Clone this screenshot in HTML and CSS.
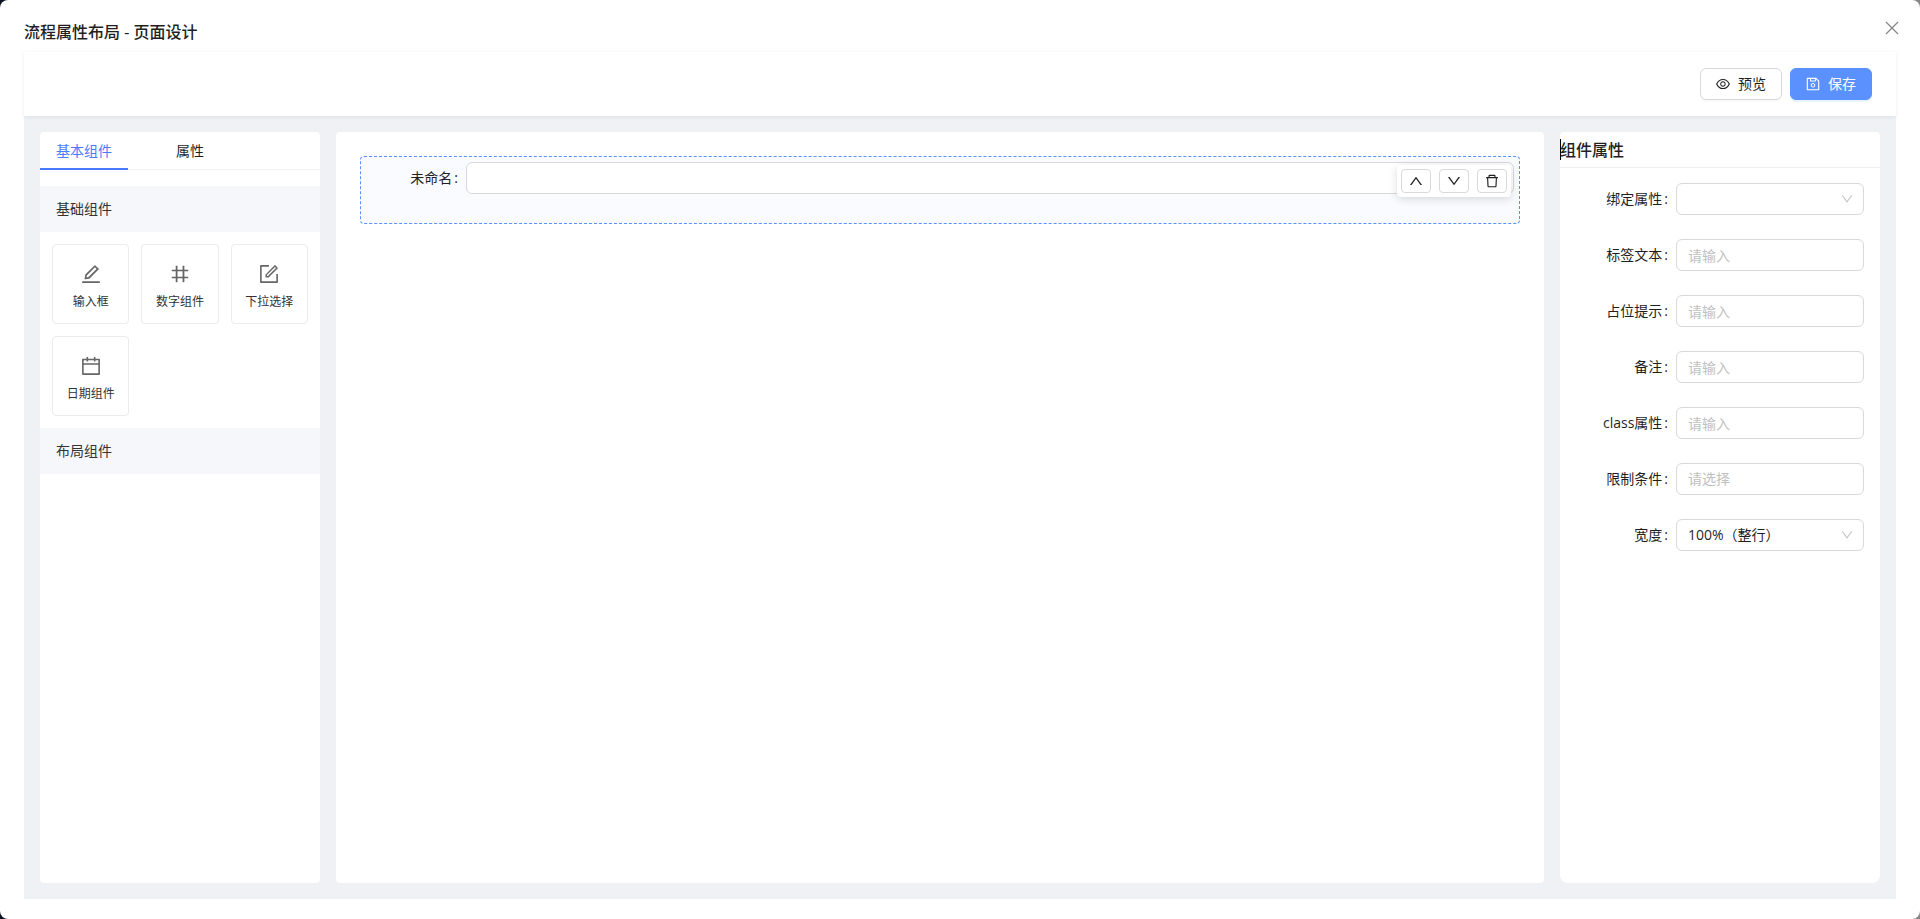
FILE: index.html
```html
<!DOCTYPE html>
<html lang="zh-CN">
<head>
<meta charset="UTF-8" />
<meta name="viewport" content="width=device-width, initial-scale=1" />
<title>流程属性布局 - 页面设计</title>
<link rel="stylesheet" href="styles.css">
</head>
<body>
  <div class="modal">
    <div class="modal-header">
      <h1 class="modal-title">流程属性布局 - 页面设计</h1>
      <button type="button" class="modal-close" aria-label="关闭">
        <svg viewBox="0 0 16 16" width="16" height="16"><path d="M2 2l12 12M14 2L2 14" fill="none" stroke="currentColor" stroke-width="1.3" /></svg>
      </button>
    </div>

    <div class="designer">
      <header class="toolbar">
        <button type="button" class="btn">
          <svg class="icon" viewBox="64 64 896 896"><path d="M942.2 486.2C847.4 286.5 704.1 186 512 186c-192.2 0-335.4 100.5-430.2 300.3a60.3 60.3 0 000 51.5C176.6 737.5 319.9 838 512 838c192.2 0 335.4-100.5 430.2-300.3 7.7-16.2 7.7-35 0-51.5zM512 766c-161.3 0-279.4-81.8-362.7-254C232.6 339.8 350.7 258 512 258c161.3 0 279.4 81.8 362.7 254C791.5 684.2 673.4 766 512 766zm-4-430c-97.2 0-176 78.8-176 176s78.8 176 176 176 176-78.8 176-176-78.8-176-176-176zm0 288c-61.9 0-112-50.1-112-112s50.1-112 112-112 112 50.1 112 112-50.1 112-112 112z" /></svg>
          <span>预览</span>
        </button>
        <button type="button" class="btn btn-primary">
          <svg class="icon" viewBox="64 64 896 896"><path d="M893.3 293.3L730.7 130.7c-7.5-7.5-16.7-13-26.7-16V112H144c-17.7 0-32 14.3-32 32v736c0 17.7 14.3 32 32 32h736c17.7 0 32-14.3 32-32V338.5c0-17-6.7-33.2-18.7-45.2zM384 184h256v104H384V184zm456 656H184V184h136v136c0 17.7 14.3 32 32 32h320c17.7 0 32-14.3 32-32V205.8l136 136V840zM512 442c-79.5 0-144 64.5-144 144s64.5 144 144 144 144-64.5 144-144-64.5-144-144-144zm0 224c-44.2 0-80-35.8-80-80s35.8-80 80-80 80 35.8 80 80-35.8 80-80 80z" /></svg>
          <span>保存</span>
        </button>
      </header>

      <main class="workspace">
        <aside class="panel components">
          <div class="tabs" role="tablist">
            <button type="button" class="tab active" role="tab" aria-selected="true">基本组件</button>
            <button type="button" class="tab" role="tab" aria-selected="false">属性</button>
          </div>
          <h2 class="group-title">基础组件</h2>
          <div class="component-grid">
            <button type="button" class="component">
              <svg class="icon-lg" viewBox="64 64 896 896"><path d="M257.7 752c2 0 4-.2 6-.5L431.9 722c2-.4 3.9-1.3 5.3-2.8l423.9-423.9a9.96 9.96 0 000-14.1L694.9 114.9c-1.9-1.9-4.4-2.9-7.1-2.9s-5.2 1-7.1 2.9L256.8 538.8c-1.5 1.5-2.4 3.3-2.8 5.3l-29.5 168.2a33.5 33.5 0 009.4 29.8c6.6 6.4 14.9 9.9 23.8 9.9zm67.4-174.4L687.8 215l73.3 73.3-362.7 362.6-88.9 15.7 15.6-89zM880 836H144c-17.7 0-32 14.3-32 32v36c0 4.4 3.6 8 8 8h784c4.4 0 8-3.6 8-8v-36c0-17.7-14.3-32-32-32z" /></svg>
              <span>输入框</span>
            </button>
            <button type="button" class="component">
              <svg class="icon-lg" viewBox="64 64 896 896"><path d="M872 394c4.4 0 8-3.6 8-8v-60c0-4.4-3.6-8-8-8H708V152c0-4.4-3.6-8-8-8h-64c-4.4 0-8 3.6-8 8v166H400V152c0-4.4-3.6-8-8-8h-64c-4.4 0-8 3.6-8 8v166H152c-4.4 0-8 3.6-8 8v60c0 4.4 3.6 8 8 8h168v236H152c-4.4 0-8 3.6-8 8v60c0 4.4 3.6 8 8 8h168v166c0 4.4 3.6 8 8 8h64c4.4 0 8-3.6 8-8V706h228v166c0 4.4 3.6 8 8 8h64c4.4 0 8-3.6 8-8V706h164c4.4 0 8-3.6 8-8v-60c0-4.4-3.6-8-8-8H708V394h164zM628 630H400V394h228v236z" /></svg>
              <span>数字组件</span>
            </button>
            <button type="button" class="component">
              <svg class="icon-lg" viewBox="64 64 896 896"><path d="M904 512h-56c-4.4 0-8 3.6-8 8v320H184V184h320c4.4 0 8-3.6 8-8v-56c0-4.4-3.6-8-8-8H144c-17.7 0-32 14.3-32 32v736c0 17.7 14.3 32 32 32h736c17.7 0 32-14.3 32-32V520c0-4.4-3.6-8-8-8z" /><path d="M355.9 534.9L354 653.8c-.1 8.9 7.1 16.2 16 16.2h.4l118-2.9c2-.1 4-.9 5.4-2.3l415.9-415c3.1-3.1 3.1-8.2 0-11.3L785.4 114.3c-1.6-1.6-3.6-2.3-5.7-2.3s-4.1.8-5.7 2.3l-415.8 415a8.3 8.3 0 00-2.3 5.6zm63.5 23.6L779.7 199l45.2 45.1-360.5 359.7-45.7 1.1.7-46.4z" /></svg>
              <span>下拉选择</span>
            </button>
            <button type="button" class="component">
              <svg class="icon-lg" viewBox="64 64 896 896"><path d="M880 184H712v-64c0-4.4-3.6-8-8-8h-56c-4.4 0-8 3.6-8 8v64H384v-64c0-4.4-3.6-8-8-8h-56c-4.4 0-8 3.6-8 8v64H144c-17.7 0-32 14.3-32 32v664c0 17.7 14.3 32 32 32h736c17.7 0 32-14.3 32-32V216c0-17.7-14.3-32-32-32zm-40 656H184V460h656v380zM184 392V256h128v48c0 4.4 3.6 8 8 8h56c4.4 0 8-3.6 8-8v-48h256v48c0 4.4 3.6 8 8 8h56c4.4 0 8-3.6 8-8v-48h128v136H184z" /></svg>
              <span>日期组件</span>
            </button>
          </div>
          <h2 class="group-title">布局组件</h2>
        </aside>

        <section class="panel canvas">
          <div class="canvas-item">
            <div class="form-item">
              <label for="preview">未命名<i>:</i></label>
              <input type="text" id="preview" class="control" />
            </div>
            <div class="item-actions">
              <button type="button" aria-label="上移">
                <svg class="icon" viewBox="64 64 896 896"><path d="M890.5 755.3L537.9 269.2c-12.8-17.6-39-17.6-51.7 0L133.5 755.3A8 8 0 00140 768h75c5.1 0 9.9-2.5 12.9-6.6L512 369.8l284.1 391.6c3 4.1 7.8 6.6 12.9 6.6h75c6.5 0 10.3-7.4 6.5-12.7z" /></svg>
              </button>
              <button type="button" aria-label="下移">
                <svg class="icon" viewBox="64 64 896 896"><path d="M884 256h-75c-5.1 0-9.9 2.5-12.9 6.6L512 654.2 227.9 262.6c-3-4.1-7.8-6.6-12.9-6.6h-75c-6.5 0-10.3 7.4-6.5 12.7l352.6 486.1c12.8 17.6 39 17.6 51.7 0l352.6-486.1c3.9-5.3.1-12.7-6.4-12.7z" /></svg>
              </button>
              <button type="button" aria-label="删除">
                <svg class="icon" viewBox="64 64 896 896"><path d="M360 184h-8c4.4 0 8-3.6 8-8v8h304v-8c0 4.4 3.6 8 8 8h-8v72h72v-80c0-35.3-28.7-64-64-64H352c-35.3 0-64 28.7-64 64v80h72v-72zm504 72H160c-17.7 0-32 14.3-32 32v32c0 4.4 3.6 8 8 8h60.4l24.7 523c1.6 34.1 29.8 61 63.9 61h454c34.2 0 62.3-26.8 63.9-61l24.7-523H888c4.4 0 8-3.6 8-8v-32c0-17.7-14.3-32-32-32zM731.3 840H292.7l-24.2-512h487l-24.2 512z" /></svg>
              </button>
            </div>
          </div>
        </section>

        <aside class="panel props">
          <h2 class="props-title">组件属性</h2>
          <form class="props-form">
            <div class="form-item">
              <label for="bind">绑定属性<i>:</i></label>
              <div class="select">
                <select id="bind" class="control"><option></option></select>
                <svg viewBox="64 64 896 896"><path d="M884 256h-75c-5.1 0-9.9 2.5-12.9 6.6L512 654.2 227.9 262.6c-3-4.1-7.8-6.6-12.9-6.6h-75c-6.5 0-10.3 7.4-6.5 12.7l352.6 486.1c12.8 17.6 39 17.6 51.7 0l352.6-486.1c3.9-5.3.1-12.7-6.4-12.7z" /></svg>
              </div>
            </div>
            <div class="form-item">
              <label for="label">标签文本<i>:</i></label>
              <input type="text" id="label" class="control" placeholder="请输入" />
            </div>
            <div class="form-item">
              <label for="placeholder">占位提示<i>:</i></label>
              <input type="text" id="placeholder" class="control" placeholder="请输入" />
            </div>
            <div class="form-item">
              <label for="remark">备注<i>:</i></label>
              <input type="text" id="remark" class="control" placeholder="请输入" />
            </div>
            <div class="form-item">
              <label for="cls">class属性<i>:</i></label>
              <input type="text" id="cls" class="control" placeholder="请输入" />
            </div>
            <div class="form-item">
              <label for="rules">限制条件<i>:</i></label>
              <select id="rules" class="control empty"><option>请选择</option></select>
            </div>
            <div class="form-item">
              <label for="width">宽度<i>:</i></label>
              <div class="select">
                <select id="width" class="control"><option>100%（整行）</option></select>
                <svg viewBox="64 64 896 896"><path d="M884 256h-75c-5.1 0-9.9 2.5-12.9 6.6L512 654.2 227.9 262.6c-3-4.1-7.8-6.6-12.9-6.6h-75c-6.5 0-10.3 7.4-6.5 12.7l352.6 486.1c12.8 17.6 39 17.6 51.7 0l352.6-486.1c3.9-5.3.1-12.7-6.4-12.7z" /></svg>
              </div>
            </div>
          </form>
        </aside>
      </main>
    </div>
  </div>
</body>
</html>
```
FILE: styles.css
```css
* {
  box-sizing: border-box;
}
body {
  margin: 0;
  background: linear-gradient(90deg, #0b1220 50%, #868686 50%);
  color: #1f1f1f;
  font-family: "Open Sans", "Noto Sans CJK SC", sans-serif;
  font-size: 14px;
  line-height: 22px;
}
button, input, select {
  font: inherit;
  color: inherit;
}
button {
  cursor: pointer;
}
svg {
  display: block;
  fill: currentColor;
}
h1, h2 {
  margin: 0;
}
.icon {
  width: 14px;
  height: 14px;
}
.icon-lg {
  width: 20px;
  height: 20px;
  color: #666;
}

/* modal */
.modal {
  display: flex;
  flex-direction: column;
  min-height: 100vh;
  padding: 20px 24px;
  background: #fff;
  border-radius: 8px;
}
.modal-header {
  display: flex;
  justify-content: space-between;
  margin-bottom: 8px;
}
.modal-title {
  font-size: 16px;
  font-weight: 500;
  line-height: 24px;
}
.modal-close {
  align-self: flex-start;
  margin-right: -4px;
  padding: 0;
  border: none;
  background: none;
  color: #888;
}

/* designer */
.designer {
  flex: 1;
  display: flex;
  flex-direction: column;
  background: #f0f1f5;
}
.toolbar {
  display: flex;
  justify-content: flex-end;
  gap: 8px;
  padding: 16px 24px;
  background: #fff;
  box-shadow: 0 1px 4px rgba(0, 21, 41, 0.08);
}
.btn {
  display: flex;
  align-items: center;
  gap: 8px;
  height: 32px;
  padding: 0 15px;
  border: 1px solid #d9d9d9;
  border-radius: 6px;
  background: #fff;
  box-shadow: 0 2px 0 rgba(0, 0, 0, 0.02);
}
.btn-primary {
  border-color: #5b91ff;
  background: #5b91ff;
  box-shadow: 0 2px 0 rgba(5, 145, 255, 0.1);
  color: #fff;
}
.workspace {
  flex: 1;
  display: flex;
  gap: 16px;
  padding: 16px;
}
.panel {
  background: #fff;
  border-radius: 4px;
}

/* left panel */
.components {
  width: 280px;
}
.tabs {
  display: flex;
  gap: 32px;
  height: 38px;
  margin-bottom: 16px;
  border-bottom: 1px solid #f0f0f0;
}
.tab {
  height: 38px;
  padding: 2px 16px 0;
  border: none;
  border-bottom: 2px solid transparent;
  background: none;
}
.tab.active {
  border-bottom-color: #4a7aff;
  color: #4a7aff;
}
.group-title {
  padding: 12px 16px;
  background: #f5f7fa;
  color: #333;
  font-size: 14px;
  font-weight: 400;
}
.component-grid {
  display: grid;
  grid-template-columns: repeat(3, 1fr);
  gap: 12px;
  padding: 12px;
}
.component {
  display: flex;
  flex-direction: column;
  align-items: center;
  gap: 8px;
  padding: 19px 0 11px;
  border: 1px solid #ebebeb;
  border-radius: 4px;
  background: #fff;
  color: #333;
  font-size: 12px;
  line-height: 20px;
}

/* canvas */
.canvas {
  flex: 1;
  padding: 24px;
}
.canvas-item {
  position: relative;
  padding: 5px;
  border: 1px dashed #5b91ff;
  border-radius: 4px;
  background: #f9fbff;
}
.item-actions {
  position: absolute;
  top: 8px;
  right: 8px;
  display: flex;
  gap: 8px;
  padding: 4px;
  background: #fff;
  border-radius: 4px;
  box-shadow: 0 2px 8px rgba(0, 0, 0, 0.15);
}
.item-actions button {
  display: flex;
  align-items: center;
  justify-content: center;
  width: 30px;
  height: 24px;
  padding: 0;
  border: 1px solid #d9d9d9;
  border-radius: 4px;
  background: #fff;
}

/* form */
.form-item {
  display: flex;
  align-items: center;
  margin-bottom: 24px;
}
.form-item label {
  flex: none;
  width: 100px;
  text-align: right;
}
.form-item label i {
  margin: 0 8px 0 2px;
  font-style: normal;
}
.control {
  flex: 1;
  width: 100%;
  min-width: 0;
  height: 32px;
  padding: 0 11px;
  border: 1px solid #d9d9d9;
  border-radius: 6px;
  outline: none;
  background: #fff;
  appearance: none;
}
.control::placeholder,
.control.empty {
  color: #bfbfbf;
}
.select {
  position: relative;
  flex: 1;
}
.select .control {
  display: block;
}
.select svg {
  position: absolute;
  top: 10px;
  right: 11px;
  width: 12px;
  height: 12px;
  color: #bfbfbf;
  pointer-events: none;
}

/* right panel */
.props {
  width: 320px;
  border-radius: 4px 4px 8px 8px;
}
.props-title {
  position: relative;
  padding: 6px 0 5px;
  border-bottom: 1px solid #f0f0f0;
  font-size: 16px;
  font-weight: 500;
  line-height: 24px;
}
/* text caret */
.props-title::before {
  content: "";
  position: absolute;
  top: 7px;
  left: 0;
  width: 1px;
  height: 21px;
  background: #000;
}
.props-form {
  padding: 15px 16px 0;
}
```
